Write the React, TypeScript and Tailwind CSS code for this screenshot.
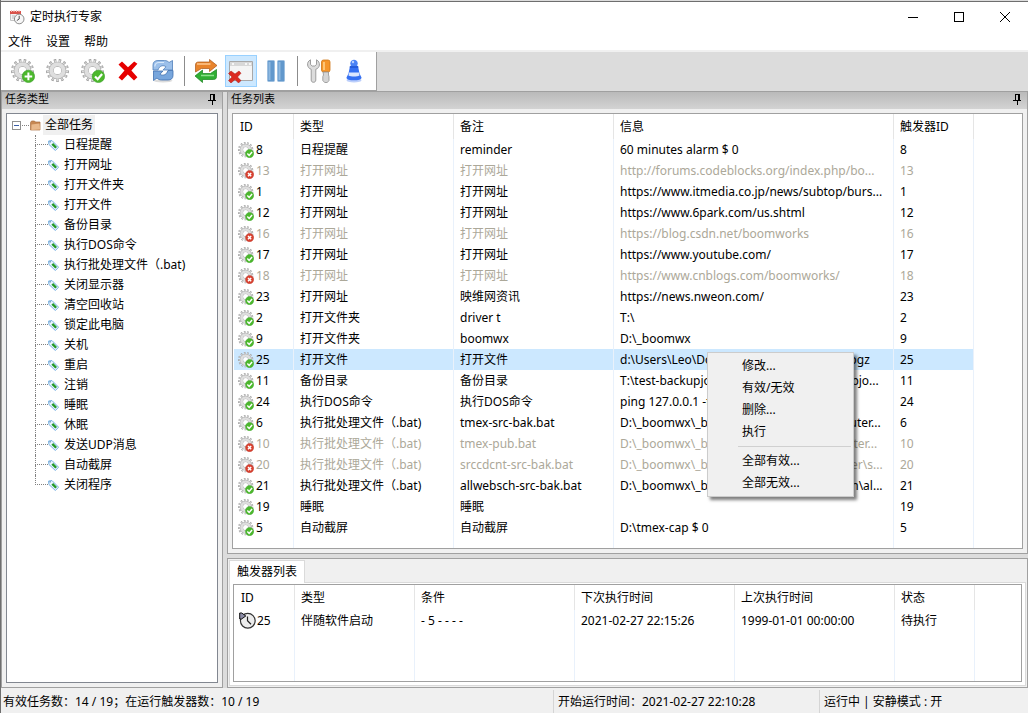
import React from 'react';

const TASK_TYPES = [
  '日程提醒', '打开网址', '打开文件夹', '打开文件', '备份目录', '执行DOS命令',
  '执行批处理文件（.bat)', '关闭显示器', '清空回收站', '锁定此电脑', '关机', '重启',
  '注销', '睡眠', '休眠', '发送UDP消息', '自动截屏', '关闭程序',
];

interface Task {
  id: number;
  type: string;
  note: string;
  info: string;
  enabled: boolean;
}

const TASKS: Task[] = [
  { id: 8, type: '日程提醒', note: 'reminder', info: '60 minutes alarm $ 0', enabled: true },
  { id: 13, type: '打开网址', note: '打开网址', info: 'http://forums.codeblocks.org/index.php/bo...', enabled: false },
  { id: 1, type: '打开网址', note: '打开网址', info: 'https://www.itmedia.co.jp/news/subtop/burs...', enabled: true },
  { id: 12, type: '打开网址', note: '打开网址', info: 'https://www.6park.com/us.shtml', enabled: true },
  { id: 16, type: '打开网址', note: '打开网址', info: 'https://blog.csdn.net/boomworks', enabled: false },
  { id: 17, type: '打开网址', note: '打开网址', info: 'https://www.youtube.com/', enabled: true },
  { id: 18, type: '打开网址', note: '打开网址', info: 'https://www.cnblogs.com/boomworks/', enabled: false },
  { id: 23, type: '打开网址', note: '映维网资讯', info: 'https://news.nweon.com/', enabled: true },
  { id: 2, type: '打开文件夹', note: 'driver t', info: 'T:\\', enabled: true },
  { id: 9, type: '打开文件夹', note: 'boomwx', info: 'D:\\_boomwx', enabled: true },
  { id: 25, type: '打开文件', note: '打开文件', info: 'd:\\Users\\Leo\\Documents\\Downloads\\a.1ogz', enabled: true },
  { id: 11, type: '备份目录', note: '备份目录', info: 'T:\\test-backupjob -> D:\\temp1\\test-backupjo...', enabled: true },
  { id: 24, type: '执行DOS命令', note: '执行DOS命令', info: 'ping 127.0.0.1 -t', enabled: true },
  { id: 6, type: '执行批处理文件（.bat)', note: 'tmex-src-bak.bat', info: 'D:\\_boomwx\\_bak\\tmex\\source\\v1\\computer...', enabled: true },
  { id: 10, type: '执行批处理文件（.bat)', note: 'tmex-pub.bat', info: 'D:\\_boomwx\\_bak\\tmex\\public\\v1\\computer...', enabled: false },
  { id: 20, type: '执行批处理文件（.bat)', note: 'srccdcnt-src-bak.bat', info: 'D:\\_boomwx\\_bak\\srccdcnt\\source\\counter\\s...', enabled: false },
  { id: 21, type: '执行批处理文件（.bat)', note: 'allwebsch-src-bak.bat', info: 'D:\\_boomwx\\_bak\\source\\v1\\allwebsearch\\al...', enabled: true },
  { id: 19, type: '睡眠', note: '睡眠', info: '', enabled: true },
  { id: 5, type: '自动截屏', note: '自动截屏', info: 'D:\\tmex-cap $ 0', enabled: true },
];

const SELECTED_ID = 25;

type Badge = 'add' | 'check' | 'cross';

const Gear: React.FC<{ badge?: Badge; className?: string }> = ({ badge, className }) => (
  <svg viewBox="0 0 24 24" className={className} aria-hidden="true">
    <circle cx="11.5" cy="11.5" r="9.4" fill="none" stroke="#9a9a9a" strokeWidth="4.2" pathLength="26" strokeDasharray="1 1" />
    <circle cx="11.5" cy="11.5" r="9.2" fill="none" stroke="#dcdcdc" strokeWidth="3" pathLength="26" strokeDasharray="0.55 1.45" strokeDashoffset="-0.22" />
    <circle cx="11.5" cy="11.5" r="6.2" fill="none" stroke="#acacac" strokeWidth="5.2" />
    <circle cx="11.5" cy="11.5" r="6.2" fill="none" stroke="#dedede" strokeWidth="4" />
    <circle cx="11.5" cy="11.5" r="3.6" fill="#fff" />
    {badge && (
      <circle cx="17.4" cy="17.4" r="6.2" fill={badge === 'cross' ? '#d8402f' : '#4cb82c'} stroke={badge === 'cross' ? '#b93325' : '#359c25'} strokeWidth="0.6" />
    )}
    {badge === 'add' && <path d="M17.4 13.6v7.6M13.6 17.4h7.6" stroke="#fff" strokeWidth="2" />}
    {badge === 'check' && <path d="M14 17.4l2.7 2.8 4.4-5.2" fill="none" stroke="#fff" strokeWidth="2.2" />}
    {badge === 'cross' && <path d="M15 15l4.8 4.8M19.8 15L15 19.8" stroke="#fff" strokeWidth="2.2" />}
  </svg>
);

const AppIcon = () => (
  <svg viewBox="0 0 16 16" className="size-4" aria-hidden="true">
    <path d="M1.5 2.5h10v9h-10z" fill="#f4f4f4" stroke="#c4c4c4" />
    <path d="M1 2h11v3H1z" fill="#d9534b" />
    <path d="M2.5 1v2M5 1v2M7.5 1v2M10 1v2" stroke="#f3c4c0" />
    <path d="M3 7h3M3 9h2" stroke="#bbb" />
    <circle cx="10.2" cy="10" r="4.8" fill="#f7f7f7" stroke="#8d8d8d" />
    <path d="M10.2 6.8V10l-2.4 1.6" fill="none" stroke="#555" />
  </svg>
);

const DeleteIcon = () => (
  <svg viewBox="0 0 24 24" className="size-6" aria-hidden="true">
    <path d="M2.5 5.5L6 2.6l6 5.6 6.2-5.8 3.2 2.4-6 6.8 6 6.6-3.4 3.4-6.2-6-5.8 6-3.5-3.2 6-6.8z" fill="#e60000" />
  </svg>
);

const RefreshIcon = () => (
  <svg viewBox="0 0 24 24" className="size-6" aria-hidden="true">
    <ellipse cx="12" cy="21.8" rx="9.5" ry="1.6" fill="#dcdcdc" />
    <path d="M2 11V6C2 3 4 1.5 7 1.5h6.5c2 0 3.5.8 4.5 2L21.5 1.5v9.5H12l3-3.2C13 6 8.500 6 7 11z" fill="#9cc0ea" stroke="#4f7fba" strokeWidth="0.8" />
    <path d="M22 11.5V16.5c0 3-2 4.5-5 4.5h-6.500c-2 0-3.5-.8-4.5-2L2.5 21.5V12H12l-3 3.2c2 1.8 6.5 1.3 8-3.7z" fill="#78a6dc" stroke="#4070ae" strokeWidth="0.8" />
    <path d="M3.8 7.5c.2-3 1.7-4 4.2-4h5" fill="none" stroke="#d8e8fa" strokeWidth="1.2" />
  </svg>
);

const SwapIcon = () => (
  <svg viewBox="0 0 24 24" className="size-6" aria-hidden="true">
    <path d="M1.5 13V6c0-2 1-3 3-3h11V.5L23 6.5l-7.5 6V9.500H7.500z" fill="#e8842c" stroke="#a9581a" strokeWidth="0.7" />
    <path d="M22.500 10.500v7c0 2-1 3-3 3h-11v3L1 17l7.500-6v3.500h8z" fill="#2fae33" stroke="#17801c" strokeWidth="0.7" />
    <path d="M3 5h13.500" stroke="#ffc890" strokeWidth="1.5" />
    <path d="M7 16.500h13" stroke="#8be08a" strokeWidth="1.5" />
  </svg>
);

const WindowCloseIcon = () => (
  <svg viewBox="0 0 26 24" className="h-6 w-[26px]" aria-hidden="true">
    <path d="M1.5 2.5h23v19h-23z" fill="#f5f5f5" stroke="#a8a8a8" />
    <path d="M2 3h22v4H2z" fill="#d8d8d8" />
    <path d="M4 5h2M17 5h2M21 5h2" stroke="#fff" strokeWidth="1.5" />
    <path d="M.5 14.5L3 12l4 3 4-3 2 2.2-3.5 3.8 3.5 3.6L10.5 24 7 20.5 3 24 .5 21.6 4 18z" fill="#dc2b22" stroke="#a81812" strokeWidth="0.5" />
  </svg>
);

const PauseIcon = () => (
  <svg viewBox="0 0 24 24" className="size-6" aria-hidden="true">
    <rect x="3.5" y="1.5" width="7" height="21" rx="1" fill="#6298cc" stroke="#9dbfe0" />
    <rect x="13.5" y="1.5" width="7" height="21" rx="1" fill="#6298cc" stroke="#9dbfe0" />
    <path d="M5.5 3v18M15.5 3v18" stroke="#8db8e0" strokeWidth="2" />
  </svg>
);

const ToolsIcon = () => (
  <svg viewBox="0 0 24 24" className="size-6" aria-hidden="true">
    <path d="M3.5.8C1.2 2 .3 4 .6 6c.3 2.2 1.6 3.6 3.6 4.3V21c0 1.5 1 2.3 2.3 2.3s2.3-.8 2.3-2.3V10.3c2-.7 3.4-2.2 3.6-4.3.2-2-.8-4.2-2.9-5.2V5.5L7.8 7H5.2L3.5 5.5z" fill="#dcdcdc" stroke="#949494" strokeWidth="0.9" />
    <rect x="14.5" y="1" width="8.5" height="12" rx="2" fill="#f5962c" stroke="#cf7716" strokeWidth="0.8" />
    <path d="M17 3v8" stroke="#ffd692" strokeWidth="1.5" />
    <path d="M16 13h5.5v3l.5 1.5v4L20.3 23.5h-2.6L15.8 21.5v-4l.7-1.5z" fill="#d5d5d5" stroke="#909090" strokeWidth="0.8" />
  </svg>
);

const AboutIcon = () => (
  <svg viewBox="0 0 24 24" className="size-6" aria-hidden="true">
    <ellipse cx="12" cy="21.2" rx="7.5" ry="2.3" fill="#bccffb" />
    <path d="M8 7h8l1.5 7.5 2 4c.5 3.800-15.500 3.800-15 0l2-4z" fill="#3570f2" />
    <path d="M7 13.500h10l.5 3c-2.600 1.400-8.400 1.400-11 0z" fill="#dbe7ff" />
    <path d="M8.3 4.5c0-5 7.4-5 7.4 0l-.7 3H9z" fill="#4a82f5" />
    <path d="M7.8 8h8.4" stroke="#1f55d4" strokeWidth="1.5" />
    <circle cx="11" cy="3" r="1.2" fill="#b8d0ff" />
  </svg>
);

const PinIcon = () => (
  <svg viewBox="0 0 9 11" className="h-[11px] w-[9px]" shapeRendering="crispEdges" aria-hidden="true">
    <path d="M2 .5h5M2.5 0v6M0 6.5h8M4.5 7v4" stroke="#000" fill="none" />
    <path d="M5 0h2v6H5z" />
  </svg>
);

const FolderIcon = () => (
  <svg viewBox="0 0 11 11" className="size-[11px] shrink-0" aria-hidden="true">
    <path d="M.5 2.5l1-1.5h3l1 1h4.5v8H.5z" fill="#c68752" stroke="#a96f40" strokeWidth="0.7" />
    <path d="M1.5 4.5l8-1 .6 6-8.8.5z" fill="#e9b98c" />
  </svg>
);

const TagIcon = () => (
  <svg viewBox="0 0 11 11" className="size-[11px] shrink-0" aria-hidden="true">
    <path d="M.6 1l3.4-.4 6.6 6.6-3.2 3.3L.9 4.4z" fill="#eaf5ff" stroke="#78b0e0" strokeWidth="1" />
    <path d="M3.4 4.7l1.8-1.8 3.8 4.1-1.7 1.6z" fill="#249a2a" />
    <path d="M1.5 1.9h1.3" stroke="#35699a" />
  </svg>
);

const ClockIcon = () => (
  <svg viewBox="0 0 17 17" className="size-[17px] shrink-0" aria-hidden="true">
    <circle cx="8.8" cy="8.8" r="7.4" fill="#ececec" stroke="#333" strokeWidth="1.2" />
    <path d="M8.5 4.5v4.3l3.5 3.4" fill="none" stroke="#222" strokeWidth="1.2" />
    <path d="M.7 1v6h1.8L6.8 4 2.8 1z" fill="#8c8ca6" stroke="#111" />
  </svg>
);

const ToolButton: React.FC<{ label: string; active?: boolean; children: React.ReactNode }> = ({ label, active, children }) => (
  <button
    aria-label={label}
    title={label}
    className={`flex size-8 items-center justify-center border ${active ? 'border-[#99d1ff] bg-[#cce8ff]' : 'border-transparent hover:bg-[#e5f3ff]'}`}
  >
    {children}
  </button>
);

const Divider = () => <div className="mx-[5px] my-[4px] w-px self-stretch bg-[#8c8c8c]" />;

const PaneCaption: React.FC<{ title: string }> = ({ title }) => (
  <div className="flex h-[17px] shrink-0 items-center justify-between bg-linear-to-b from-[#bababa] to-[#d3d3d3] pr-[5px] pb-[3px] pl-[3px] text-[11px]">
    <h2>{title}</h2>
    <button aria-label="自动隐藏"><PinIcon /></button>
  </div>
);

const HeaderCell: React.FC<{ children?: React.ReactNode; last?: boolean }> = ({ children, last }) => (
  <th className={`h-[25px] truncate px-[6px] text-left font-normal ${last ? '' : 'border-r border-[#e5e5e5]'}`}>{children}</th>
);

const Cell: React.FC<{ children?: React.ReactNode }> = ({ children }) => (
  <td className="truncate border-r border-[#e9f1fb] px-[6px]">{children}</td>
);

const TaskTree = () => (
  <div className="flex-1 border border-[#828790] bg-white pt-px pl-[5px]">
    <div className="flex h-5 items-center">
      <button aria-label="折叠" className="flex size-[9px] items-center justify-center border border-[#919191] bg-white">
        <span className="h-px w-[5px] bg-[#3b5fa8]" />
      </button>
      <span className="mx-px w-[7px] border-t border-dotted border-[#808080]" />
      <FolderIcon />
      <span className="ml-[2px] flex h-5 items-center bg-[#f0f0f0] px-[2px]">全部任务</span>
    </div>
    <ul className="ml-[23px]">
      {TASK_TYPES.map((type, index) => (
        <li key={type} className="flex h-5 items-center">
          <span className="flex h-5 w-[13px] flex-col">
            <span className="h-[10px] border-b border-l border-dotted border-[#808080]" />
            {index < TASK_TYPES.length - 1 && <span className="h-[10px] border-l border-dotted border-[#808080]" />}
          </span>
          <TagIcon />
          <span className="ml-[5px]">{type}</span>
        </li>
      ))}
    </ul>
  </div>
);

const ContextMenu = () => (
  <div role="menu" className="absolute top-[238px] left-[474px] w-[147px] border border-[#ccc] bg-[#f0f0f0] p-[2px] shadow-[3px_3px_3px_rgba(0,0,0,0.5)]">
    {['修改...', '有效/无效', '删除...', '执行'].map((item) => (
      <button key={item} role="menuitem" className="flex h-[22px] w-full items-center pl-8 hover:bg-[#91c9f7]">{item}</button>
    ))}
    <div className="my-[3px] ml-[28px] h-px bg-[#d0d0d0]" />
    {['全部有效...', '全部无效...'].map((item) => (
      <button key={item} role="menuitem" className="flex h-[22px] w-full items-center pl-8 hover:bg-[#91c9f7]">{item}</button>
    ))}
  </div>
);

const TaskTable = () => (
  <div className="relative min-h-0 flex-1 border border-[#a0a0a0] bg-white pl-px">
    <table className="h-full w-full table-fixed border-separate border-spacing-0">
      <colgroup>
        <col className="w-[60px]" />
        <col className="w-[160px]" />
        <col className="w-[160px]" />
        <col className="w-[280px]" />
        <col className="w-[80px]" />
        <col />
      </colgroup>
      <thead>
        <tr>
          <HeaderCell>ID</HeaderCell>
          <HeaderCell>类型</HeaderCell>
          <HeaderCell>备注</HeaderCell>
          <HeaderCell>信息</HeaderCell>
          <HeaderCell>触发器ID</HeaderCell>
          <HeaderCell last />
        </tr>
      </thead>
      <tbody>
        {TASKS.map((task) => (
          <tr
            key={task.id}
            className={`h-[21px] ${task.enabled ? 'text-black' : 'text-[#aca899]'} ${task.id === SELECTED_ID ? '[&>td:not(:last-child)]:bg-[#cce8ff]' : ''}`}
          >
            <td className="border-r border-[#e9f1fb] pl-[4px]">
              <div className="flex items-center gap-[2px]">
                <Gear badge={task.enabled ? 'check' : 'cross'} className="size-4" />
                {task.id}
              </div>
            </td>
            <Cell>{task.type}</Cell>
            <Cell>{task.note}</Cell>
            <Cell>{task.info}</Cell>
            <Cell>{task.id}</Cell>
            <td />
          </tr>
        ))}
        <tr>
          <Cell /><Cell /><Cell /><Cell /><Cell /><td />
        </tr>
      </tbody>
    </table>
    <ContextMenu />
  </div>
);

const TriggerTable = () => (
  <div className="min-h-0 flex-1 border border-[#a0a0a0] bg-white pl-px">
    <table className="h-full w-full table-fixed border-separate border-spacing-0">
      <colgroup>
        <col className="w-[60px]" />
        <col className="w-[120px]" />
        <col className="w-[160px]" />
        <col className="w-[160px]" />
        <col className="w-[160px]" />
        <col className="w-[80px]" />
        <col />
      </colgroup>
      <thead>
        <tr>
          <HeaderCell>ID</HeaderCell>
          <HeaderCell>类型</HeaderCell>
          <HeaderCell>条件</HeaderCell>
          <HeaderCell>下次执行时间</HeaderCell>
          <HeaderCell>上次执行时间</HeaderCell>
          <HeaderCell>状态</HeaderCell>
          <HeaderCell last />
        </tr>
      </thead>
      <tbody>
        <tr className="h-[21px]">
          <td className="border-r border-[#e9f1fb] pl-[4px]">
            <div className="flex items-center gap-px"><ClockIcon />25</div>
          </td>
          <Cell>伴随软件启动</Cell>
          <Cell>- 5 - - - -</Cell>
          <Cell>2021-02-27 22:15:26</Cell>
          <Cell>1999-01-01 00:00:00</Cell>
          <Cell>待执行</Cell>
          <td />
        </tr>
        <tr>
          <Cell /><Cell /><Cell /><Cell /><Cell /><Cell /><td />
        </tr>
      </tbody>
    </table>
  </div>
);

export default function App() {
  return (
    <div className="flex h-screen flex-col overflow-hidden border-l border-[#6e6e6e] bg-[#dcdcdc] font-['Noto_Sans','Noto_Sans_CJK_SC',sans-serif] text-[12px] leading-4 text-black">
      <header className="mt-px shrink-0 border-t border-[#6e6e6e] bg-white">
        <div className="flex h-[30px] items-center pl-2">
          <AppIcon />
          <h1 className="ml-[5px] flex-1">定时执行专家</h1>
          <button aria-label="最小化" className="flex h-full w-[46px] items-center justify-center">
            <svg viewBox="0 0 10 10" className="size-[10px]" shapeRendering="crispEdges"><path d="M0 5.5h10" stroke="#000" /></svg>
          </button>
          <button aria-label="最大化" className="flex h-full w-[46px] items-center justify-center">
            <svg viewBox="0 0 10 10" className="size-[10px]" shapeRendering="crispEdges"><path d="M.5.5h9v9h-9z" fill="none" stroke="#000" /></svg>
          </button>
          <button aria-label="关闭" className="flex h-full w-[46px] items-center justify-center">
            <svg viewBox="0 0 10 10" className="size-[10px]"><path d="M0 0l10 10M10 0L0 10" stroke="#000" /></svg>
          </button>
        </div>
        <nav className="flex h-[18px] items-center pt-[2px]">
          <button className="px-[7px]">文件</button>
          <button className="px-[7px]">设置</button>
          <button className="px-[7px]">帮助</button>
        </nav>
      </header>

      <div className="flex shrink-0 border-t-2 border-b border-t-[#f0f0f0] border-b-[#a0a0a0]">
        <div className="flex h-[39px] items-center border-r border-b border-[#a0a0a0] bg-white px-[6px]">
          <div className="flex gap-[3px]">
            <ToolButton label="新建任务"><Gear badge="add" className="size-6 shrink-0" /></ToolButton>
            <ToolButton label="修改任务"><Gear className="size-6 shrink-0" /></ToolButton>
            <ToolButton label="有效/无效"><Gear badge="check" className="size-6 shrink-0" /></ToolButton>
            <ToolButton label="删除任务"><DeleteIcon /></ToolButton>
            <ToolButton label="刷新"><RefreshIcon /></ToolButton>
          </div>
          <Divider />
          <div className="flex gap-[3px]">
            <ToolButton label="切换"><SwapIcon /></ToolButton>
            <ToolButton label="安静模式" active><WindowCloseIcon /></ToolButton>
            <ToolButton label="暂停"><PauseIcon /></ToolButton>
          </div>
          <Divider />
          <div className="flex gap-[3px]">
            <ToolButton label="设置"><ToolsIcon /></ToolButton>
            <ToolButton label="关于"><AboutIcon /></ToolButton>
          </div>
        </div>
      </div>

      <main className="flex min-h-0 flex-1 gap-[4px]">
        <section className="flex w-[222px] shrink-0 flex-col border-x border-b border-[#a0a0a0] bg-[#f0f0f0]">
          <PaneCaption title="任务类型" />
          <div className="flex min-h-0 flex-1 p-[4px]">
            <TaskTree />
          </div>
        </section>

        <div className="flex min-w-0 flex-1 flex-col gap-[4px]">
          <section className="flex min-h-0 flex-1 flex-col border-x border-b border-[#a0a0a0] bg-[#f0f0f0]">
            <PaneCaption title="任务列表" />
            <div className="flex min-h-0 flex-1 p-[4px]">
              <TaskTable />
            </div>
          </section>

          <section className="flex h-[130px] shrink-0 flex-col border border-[#a0a0a0] bg-[#f0f0f0] p-px">
            <div className="flex h-[23px] shrink-0">
              <button role="tab" aria-selected="true" className="border border-b-0 border-[#dadada] bg-white px-[7px]">触发器列表</button>
              <div className="flex-1 border-b border-[#dadada]" />
            </div>
            <div className="flex min-h-0 flex-1 border border-t-0 border-[#dadada] bg-white p-[3px] pt-px">
              <TriggerTable />
            </div>
          </section>
        </div>
      </main>

      <footer className="flex h-[25px] shrink-0 items-center bg-[#f0f0f0] pt-[2px]">
        <span className="flex-1 truncate pl-[2px]">有效任务数：14 / 19；在运行触发器数：10 / 19</span>
        <span className="flex h-full w-[266px] items-center border-l border-[#d5d5d5] pl-1">开始运行时间：2021-02-27 22:10:28</span>
        <span className="flex h-full w-[209px] items-center border-l border-[#d5d5d5] pl-1">运行中 | 安静模式 : 开</span>
      </footer>
    </div>
  );
}
